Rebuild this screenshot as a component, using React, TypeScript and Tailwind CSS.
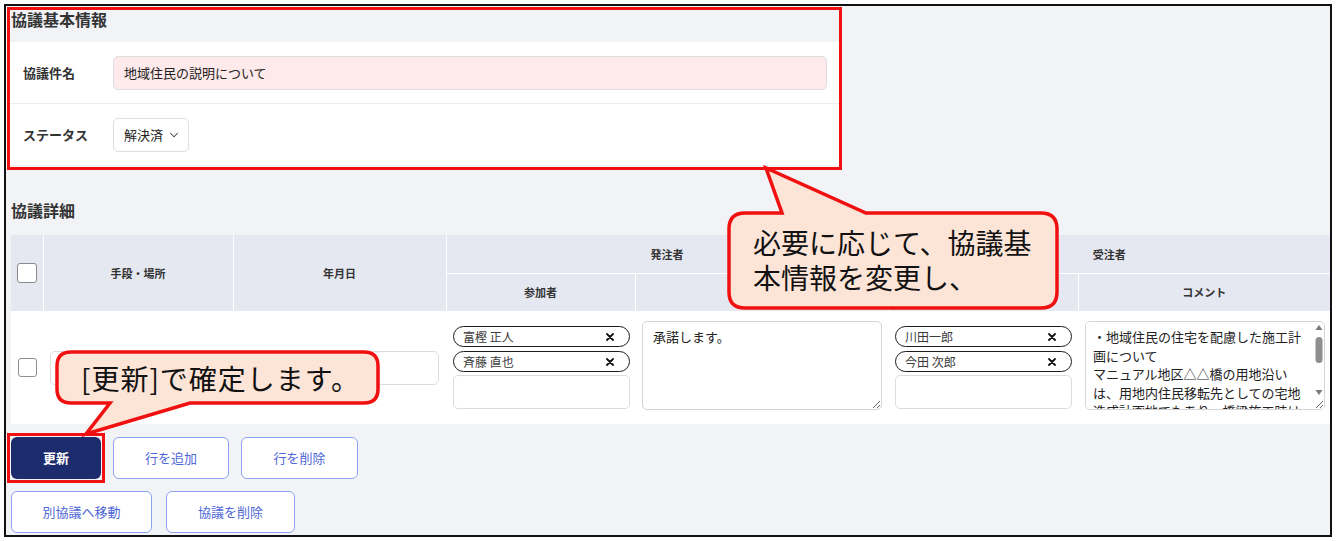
import { ChevronDown } from 'lucide-react';

const colWidths = [32, 190, 213, 189, 253, 190, 252];

const longComment =
  '・地域住民の住宅を配慮した施工計\n画について\nマニュアル地区△△橋の用地沿い\nは、用地内住民移転先としての宅地\n造成計画地でもあり、橋梁施工時は\n周辺住民への騒音・振動に配慮する\nこと。';

function CheckBox() {
  return <span className="block w-[19px] h-[19px] mx-auto rounded-[3px] border border-[#8f8f8f] bg-white" />;
}

function Pill({ name }: { name: string }) {
  return (
    <div className="flex items-center justify-between h-[21px] rounded-full border-[1.5px] border-[#1b1b1b] bg-white pl-[9px] pr-[15px] text-[12px] leading-none text-[#3a3a3a]">
      <span>{name}</span>
      <svg width="8" height="8" viewBox="0 0 8 8">
        <path d="M1 1l6 6M7 1L1 7" stroke="#111" strokeWidth="1.8" strokeLinecap="round" />
      </svg>
    </div>
  );
}

function Participants({ names }: { names: string[] }) {
  return (
    <div className="flex flex-col">
      <div className="flex flex-col gap-[4px]">
        {names.map((n) => (
          <Pill key={n} name={n} />
        ))}
      </div>
      <div className="mt-[3px] h-[34px] rounded-[5px] border border-[#dcdcdc] bg-white" />
    </div>
  );
}

// classic scrollbar look for the long comment box
function ScrollBar() {
  return (
    <svg className="absolute left-[228px] top-[1px] pointer-events-none" width="12" height="76" viewBox="0 0 12 76">
      <polygon points="6,3 9.5,8 2.5,8" fill="#7a7a7a" />
      <rect x="2.5" y="15" width="7" height="26" rx="3.5" fill="#8e8e8e" />
      <polygon points="2.5,68 9.5,68 6,73" fill="#7a7a7a" />
    </svg>
  );
}

const th = 'bg-[#e5e8f1] border-r border-white text-[11px] font-bold text-[#333] text-center align-middle';
const subBtn = 'h-[42px] rounded-[6px] border border-[#8ea2ef] bg-white text-[13px] text-[#4f68d6]';

export default function App() {
  return (
    <div className="w-[1337px] h-[541px] bg-white p-[4px] font-['Noto_Sans_CJK_JP','Noto_Sans',sans-serif]">
      <div className="relative w-[1328px] h-[533px] border-2 border-[#111] bg-[#f2f3f7] overflow-hidden">
        <div className="flex flex-col">
          {/* basic info */}
          <section className="ml-[4px] mt-[4px] w-[829px] pb-[2px] outline-3 outline-[#f01010]">
            <h2 className="h-[32px] pl-[1px] text-[16px] leading-[18px] font-bold text-[#333]">協議基本情報</h2>
            <div className="bg-white">
              <div className="flex items-center h-[62px] border-b border-[#eeeeee]">
                <div className="w-[103px] pl-[13px] text-[13px] font-bold text-[#333]">協議件名</div>
                <div className="flex-1 mr-[12px] h-[34px] flex items-center rounded-[5px] border border-[#dedede] bg-[#feeaea] px-[10px] text-[13px] text-[#222]">
                  地域住民の説明について
                </div>
              </div>
              <div className="flex items-center h-[61px]">
                <div className="w-[103px] pl-[13px] text-[13px] font-bold text-[#333]">ステータス</div>
                <div className="w-[76px] h-[34px] flex items-center gap-[4px] rounded-[5px] border border-[#dedede] bg-white pl-[10px] text-[13px] text-[#222]">
                  解決済
                  <ChevronDown size={14} strokeWidth={1.8} className="text-[#444]" />
                </div>
              </div>
            </div>
          </section>

          <h2 className="ml-[5px] mt-[31px] text-[16px] leading-[24px] font-bold text-[#333]">協議詳細</h2>

          {/* detail table */}
          <table className="ml-[5px] mt-[13px] w-[1319px] table-fixed border-collapse">
            <colgroup>
              {colWidths.map((w, i) => (
                <col key={i} style={{ width: w }} />
              ))}
            </colgroup>
            <thead>
              <tr className="h-[38px]">
                <th rowSpan={2} className={th}>
                  <span className="block w-[20px] h-[20px] mx-auto rounded-[3px] border border-[#8a8a8a] bg-white" />
                </th>
                <th rowSpan={2} className={th}>手段・場所</th>
                <th rowSpan={2} className={th}>年月日</th>
                <th colSpan={2} className={`${th} border-b`}>発注者</th>
                <th colSpan={2} className={`${th} border-b border-r-0`}>受注者</th>
              </tr>
              <tr className="h-[38px]">
                <th className={th}>参加者</th>
                <th className={th}>コメント</th>
                <th className={th}>参加者</th>
                <th className={`${th} border-r-0`}>コメント</th>
              </tr>
            </thead>
            <tbody>
              <tr className="h-[113px] bg-white">
                <td className="align-middle">
                  <CheckBox />
                </td>
                <td className="align-middle px-[7px]">
                  <div className="h-[34px] rounded-[5px] border border-[#dcdcdc] bg-white" />
                </td>
                <td className="align-middle pl-[8px] pr-[7px]">
                  <div className="h-[34px] rounded-[5px] border border-[#dcdcdc] bg-white" />
                </td>
                <td className="align-middle pl-[7px] pr-[5px]">
                  <Participants names={['富樫 正人', '斉藤 直也']} />
                </td>
                <td className="align-middle pl-[7px] pr-[6px] pb-[4px]">
                  <textarea
                    readOnly
                    defaultValue="承諾します。"
                    className="block w-full h-[89px] rounded-[5px] border border-[#d4d4d4] bg-white pl-[10px] pr-[6px] pt-[6px] text-[13px] leading-[18.5px] text-[#222] outline-none"
                  />
                </td>
                <td className="align-middle pl-[7px] pr-[6px]">
                  <Participants names={['川田一郎', '今田 次郎']} />
                </td>
                <td className="align-middle pl-[7px] pr-[5px] pb-[4px]">
                  <div className="relative">
                    <textarea
                      readOnly
                      defaultValue={longComment}
                      className="block w-full h-[89px] rounded-[5px] border border-[#d4d4d4] bg-white pl-[7px] pr-[16px] pt-[6px] text-[13px] leading-[18.5px] text-[#222] outline-none"
                    />
                    <ScrollBar />
                  </div>
                </td>
              </tr>
            </tbody>
          </table>

          {/* actions */}
          <div className="ml-[5px] mt-[13px] flex gap-[12px]">
            <div className="outline-3 outline-[#f01010] outline-offset-1">
              <button className="block h-[42px] w-[90px] rounded-[6px] bg-[#1d2c6c] text-[13px] font-bold text-white">
                更新
              </button>
            </div>
            <button className={`${subBtn} w-[116px]`}>行を追加</button>
            <button className={`${subBtn} w-[117px]`}>行を削除</button>
          </div>
          <div className="ml-[5px] mt-[12px] flex gap-[14px]">
            <button className={`${subBtn} w-[141px]`}>別協議へ移動</button>
            <button className={`${subBtn} w-[129px]`}>協議を削除</button>
          </div>
        </div>

        {/* speech bubbles */}
        <svg className="absolute left-[719px] top-[159px]" width="336" height="147" viewBox="0 0 336 147">
          <path
            d="M20 48H57L41 3L141 48H316Q332 48 332 64V127Q332 143 316 143H20Q4 143 4 127V64Q4 48 20 48Z"
            fill="#fce4d6"
            stroke="#f01010"
            strokeWidth="3.5"
          />
        </svg>
        <div className="absolute left-[723px] top-[207px] w-[328px] h-[95px] px-[24px] pt-[12px] text-[28px] leading-[35px] text-[#111] whitespace-nowrap">
          必要に応じて、協議基
          <br />
          本情報を変更し、
        </div>

        <svg className="absolute left-[47px] top-[342px]" width="330" height="90" viewBox="0 0 330 90">
          <path
            d="M18 4H311Q325 4 325 18V41Q325 55 311 55H137L33 86L57 55H18Q4 55 4 41V18Q4 4 18 4Z"
            fill="#fce4d6"
            stroke="#f01010"
            strokeWidth="3.5"
          />
        </svg>
        <div className="absolute left-[51px] top-[346px] w-[321px] h-[51px] flex items-center justify-center pl-[6px] text-[28px] leading-none tracking-[1px] text-[#111] whitespace-nowrap">
          [更新]で確定します。
        </div>
      </div>
    </div>
  );
}
